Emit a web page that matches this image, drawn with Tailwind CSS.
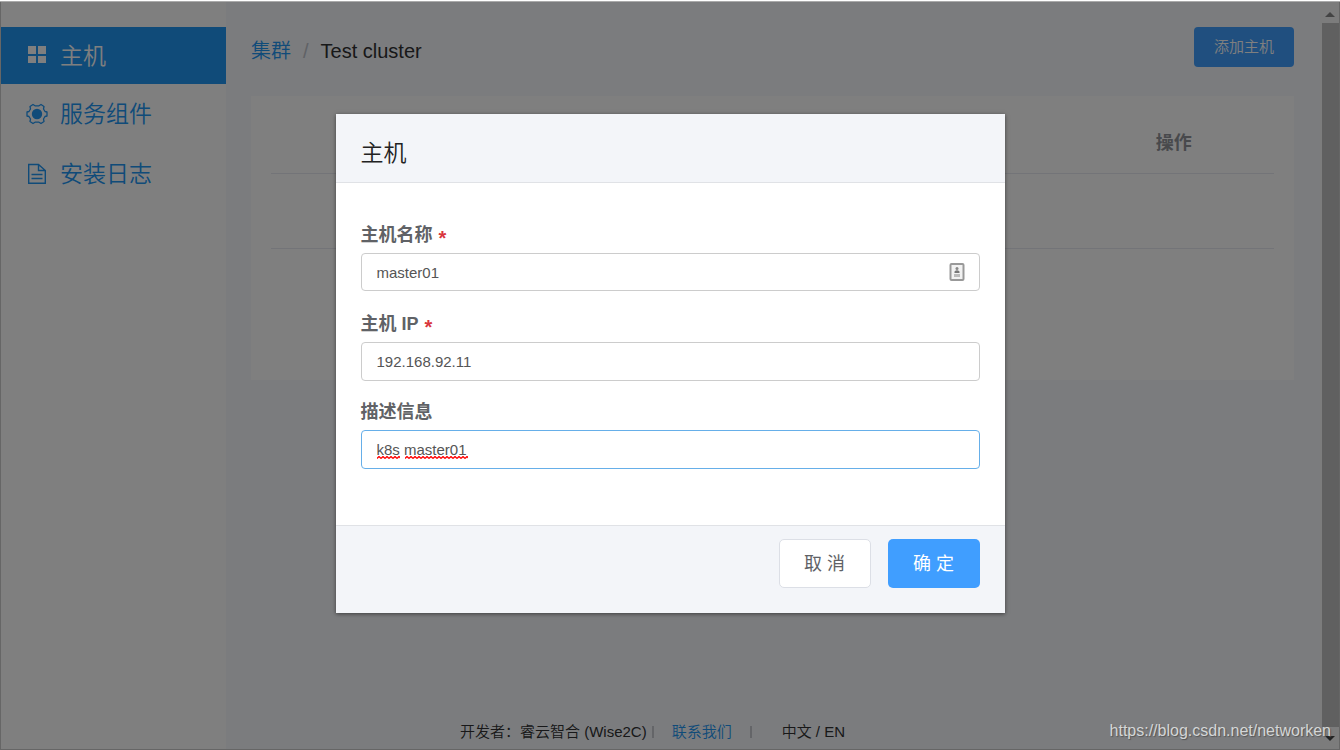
<!DOCTYPE html>
<html lang="zh-CN">
<head>
<meta charset="utf-8">
<meta name="viewport" content="width=device-width, initial-scale=1">
<title>主机</title>
<script src="https://cdn.jsdelivr.net/npm/@tailwindcss/browser@4"></script>
</head>
<body class="relative h-screen overflow-hidden bg-white pt-px font-['Liberation_Sans','Noto_Sans_CJK_SC',sans-serif] text-[15px] text-[#303133]">
<div class="relative flex h-full border-b border-l border-[#ccc]">
  <div class="flex min-w-0 flex-1 bg-[#f7f9fc]">
    <nav class="w-[225px] shrink-0 bg-white pt-[26px] text-[23px] leading-8 font-[350] text-[#2196f3]" aria-label="导航">
      <a href="#hosts" class="flex h-[57px] items-center gap-3 bg-[#2196f3] pl-[25px] text-white">
        <svg class="size-[22px]" viewBox="0 0 22 22" fill="currentColor" aria-hidden="true"><path d="M2 1h8v8H2zM12 1h8v8h-8zM2 11h8v7H2zM12 11h8v7H12z"/></svg>
        <span>主机</span>
      </a>
      <a href="#components" class="flex h-[60px] items-center gap-3 pl-[25px]">
        <svg class="size-[22px]" viewBox="0 0 22 22" fill="none" stroke="currentColor" stroke-width="1.3" stroke-linejoin="round" aria-hidden="true"><path d="M7 1.500L9 2.800H13L15 1.500L18 3.500L17.500 6L19 8.500L21 9V13L19 13.500L17.500 16L18 18.500L15 20.500L13 19.200H9L7 20.500L4 18.500L4.500 16L3 13.500L1 13V9L3 8.500L4.500 6L4 3.500Z"/><circle cx="11" cy="11" r="5.200" fill="currentColor" stroke="none"/></svg>
        <span>服务组件</span>
      </a>
      <a href="#logs" class="flex h-[60px] items-center gap-3 pl-[25px]">
        <svg class="size-[22px]" viewBox="0 0 22 22" fill="none" stroke="currentColor" stroke-width="1.4" aria-hidden="true"><path d="M2.700 1.500H12.500L19.300 7.500V20.300H2.700ZM12.500 1.500V7.500H19.300M5.500 11.500H16.500M5.500 15.500H16.500"/></svg>
        <span>安装日志</span>
      </a>
    </nav>
    <main class="flex min-w-0 flex-1 flex-col pr-[26px] pl-[25px] pt-[26px]">
      <header class="flex items-center justify-between">
        <div class="flex items-center pt-2 text-xl">
          <a href="#clusters" class="font-[350] text-[#2196f3]">集群</a>
          <span class="mx-3 text-[#c0c4cc]">/</span>
          <span>Test cluster</span>
        </div>
        <button type="button" class="h-10 w-[100px] rounded bg-[#409eff] text-[15px] font-[350] text-white">添加主机</button>
      </header>
      <section class="mt-[29px] h-[284px] bg-white px-5 pt-[18px]">
        <table class="w-full table-fixed text-lg text-[#909399]">
          <thead><tr class="h-[59px] border-b border-[#e6e9f0]"><th></th><th></th><th></th><th></th><th class="font-bold">操作</th></tr></thead>
          <tbody><tr class="h-[75px] border-b border-[#e6e9f0]"><td></td><td></td><td></td><td></td><td></td></tr></tbody>
        </table>
      </section>
      <footer class="mt-auto flex h-[33px] items-center pb-px pl-[209px] leading-5 font-[350] whitespace-nowrap">
        <span>开发者：睿云智合 (Wise2C)</span>
        <span class="ml-[5px] h-3 w-[2px] bg-[#c8cad0]"></span>
        <a href="#contact" class="ml-[18px] text-[#2196f3]">联系我们</a>
        <span class="ml-[18px] h-3 w-[2px] bg-[#c8cad0]"></span>
        <span class="ml-[30px]">中文 / EN</span>
      </footer>
    </main>
  </div>
  <div class="flex w-5 shrink-0 flex-col items-center border-r border-[#ccc] bg-[#f8f8f8]" aria-hidden="true">
    <div class="flex h-[22px] items-center pt-1"><svg class="h-[5px] w-[10px]" viewBox="0 0 10 5"><path d="M0 5L5 0L10 5Z" fill="#888"/></svg></div>
    <div class="ml-px w-[17px] flex-1 bg-[#c1c1c1]"></div>
    <div class="flex h-[22px] items-center"><svg class="h-[5px] w-[10px]" viewBox="0 0 10 5"><path d="M0 0L5 5L10 0Z" fill="#444"/></svg></div>
  </div>
</div>

<div class="absolute inset-x-0 top-px bottom-0 flex items-start justify-center border-t border-[#aaa] bg-black/50 pt-28">
  <form role="dialog" aria-labelledby="dialog-title" class="w-[669px] bg-white text-[#606266] shadow-[0_1px_4px_rgba(0,0,0,0.5)]">
    <div class="flex h-[69px] items-center border-b border-[#e0e2e6] bg-[#f3f5f9] px-[25px] pt-[10px]">
      <h1 id="dialog-title" class="text-[23px] font-[350] text-[#222]">主机</h1>
    </div>
    <div class="flex h-[342px] flex-col px-[25px] pt-[38px]">
      <label for="name" class="flex h-8 items-start gap-[6px] text-lg leading-7 font-bold">主机名称 <span class="pt-[3px] text-xl leading-7 text-[#d9363e]">*</span></label>
      <div class="relative">
        <input id="name" type="text" value="master01" class="h-[38px] w-full rounded border border-[#ccc] px-[15px] text-[15px] text-[#555] outline-none">
        <svg class="absolute top-[10px] right-[15px] h-[18px] w-4" viewBox="0 0 16 18" aria-hidden="true"><rect x="1.500" y="1" width="13" height="16" rx="1" fill="#f2f2f2" stroke="#999" stroke-width="2"/><circle cx="8" cy="5.500" r="1.500" fill="#888"/><path d="M5.500 10V8.500Q8 6 10.500 8.500V10Z" fill="#777"/><path d="M5 11h6v3H5z" fill="#bbb"/></svg>
      </div>
      <label for="ip" class="mt-[19px] flex h-8 items-start gap-[6px] text-lg leading-7 font-bold">主机 IP <span class="pt-[3px] text-xl leading-7 text-[#d9363e]">*</span></label>
      <input id="ip" type="text" value="192.168.92.11" class="h-[39px] w-full rounded border border-[#ccc] px-[15px] text-[15px] text-[#555] outline-none">
      <label for="desc" class="mt-[17px] flex h-8 items-start text-lg leading-7 font-bold">描述信息</label>
      <div class="relative">
        <input id="desc" type="text" value="k8s master01" class="h-[39px] w-full rounded border border-[#66afe9] px-[15px] text-[15px] text-[#555] outline-none">
        <svg class="absolute top-[26px] left-4 h-[3px] w-[91px]" aria-hidden="true"><defs><pattern id="wave" width="4" height="3" patternUnits="userSpaceOnUse"><path d="M0 2.500L2 .5L4 2.500" fill="none" stroke="#f00" stroke-width="1.300"/></pattern></defs><rect width="23" height="3" fill="url(#wave)"/><rect x="28" width="63" height="3" fill="url(#wave)"/></svg>
      </div>
    </div>
    <div class="flex h-[88px] items-start justify-end gap-[17px] border-t border-[#e0e2e6] bg-[#f3f5f9] px-[25px] pt-[13px] text-lg">
      <button type="button" class="h-[49px] w-[92px] rounded-[5px] border border-[#dcdfe6] bg-white">取 消</button>
      <button type="submit" class="h-[49px] w-[92px] rounded-[5px] bg-[#409eff] text-white">确 定</button>
    </div>
  </form>
</div>
<div class="absolute right-[9px] bottom-[9px] text-base leading-5 text-[#d4d6d6] [text-shadow:1px_1px_1px_#555]">https://blog.csdn.net/networken</div>
</body>
</html>
